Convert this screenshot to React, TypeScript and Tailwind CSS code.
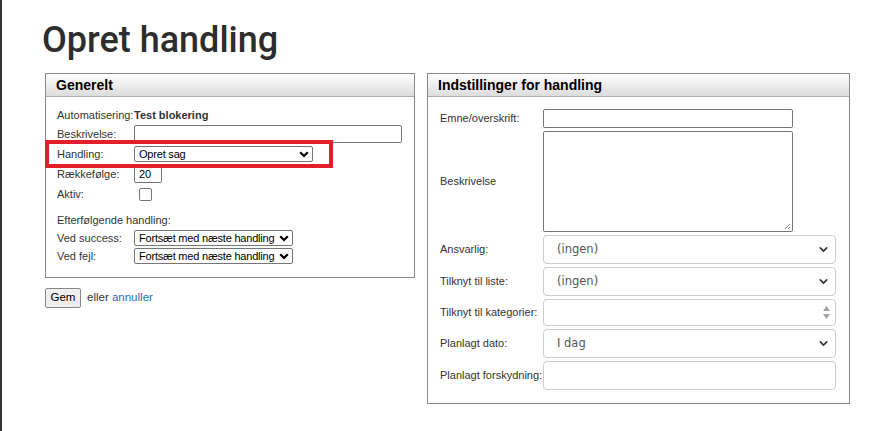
import { ChevronDown } from "lucide-react"

const labelFont = "font-['Liberation_Sans',Arial,sans-serif] text-[11px] text-[#333]"

function PanelHeader({ title }: { title: string }) {
  return (
    <div className="h-[23px] border-b border-[#aaa] bg-gradient-to-b from-white to-[#dcdcdc] pl-[10px] flex items-center">
      <span className="font-['Liberation_Sans',Arial,sans-serif] font-bold text-[14px] text-black">{title}</span>
    </div>
  )
}

// old-fashioned select used in the left panel
function OldSelect({ value, width }: { value: string; width: string }) {
  return (
    <div
      className={`${width} h-[16px] border border-[#767676] rounded-[2px] bg-white flex items-center justify-between pl-[4px] pr-[3px]`}
    >
      <span className="font-['Liberation_Sans',Arial,sans-serif] text-[11px] text-black leading-none tracking-[-0.2px]">{value}</span>
      <svg width="10" height="7" viewBox="0 0 10 7">
        <path d="M1.2 1.2 L5 5 L8.8 1.2" fill="none" stroke="#000" strokeWidth="2.2" />
      </svg>
    </div>
  )
}

// bootstrap-ish select used in the right panel
function NewSelect({ value, height = "h-[29px]" }: { value: string; height?: string }) {
  return (
    <div
      className={`w-[293px] ${height} border border-[#ccc] rounded-[4px] bg-white flex items-center justify-between pl-[13px] pr-[5px]`}
    >
      <span className="font-['DejaVu_Sans',Verdana,sans-serif] text-[11.5px] text-[#555]">{value}</span>
      <ChevronDown className="w-[13px] h-[13px] text-[#333]" strokeWidth={3} />
    </div>
  )
}

function LeftRow({ label, children, h = "h-[20px]" }: { label: string; children?: React.ReactNode; h?: string }) {
  return (
    <div className={`flex items-center ${h}`}>
      <div className={`w-[77px] shrink-0 ${labelFont}`}>{label}</div>
      {children}
    </div>
  )
}

function RightRow({ label, children, h }: { label: string; children?: React.ReactNode; h: string }) {
  return (
    <div className={`flex items-center ${h}`}>
      <div className={`w-[103px] shrink-0 ${labelFont}`}>{label}</div>
      {children}
    </div>
  )
}

export default function App() {
  return (
    <div className="min-h-screen bg-white border-l-2 border-[#333] pl-[40px] pt-[22px]">
      <h1 className="mb-[15px] leading-[36px] font-['Roboto',sans-serif] font-medium text-[36px] text-[#2d2d2d]">
        Opret handling
      </h1>

      <div className="ml-[3px] flex items-start gap-3">
        {/* Generelt */}
        <div className="w-[370px]">
          <div className="relative border border-[#888] bg-white">
            <PanelHeader title="Generelt" />
            <div className="pl-[11px] pt-[10px] pb-[12px]">
              <div className={`flex items-center h-[17px] ${labelFont}`}>
                <span className="w-[77px]">Automatisering:</span>
                <span className="font-bold">Test blokering</span>
              </div>
              <LeftRow label="Beskrivelse:">
                <div className="w-[268px] h-[18px] border border-[#767676] rounded-[2px] bg-white" />
              </LeftRow>
              <LeftRow label="Handling:">
                <OldSelect value="Opret sag" width="w-[179px]" />
              </LeftRow>
              <LeftRow label="Rækkefølge:">
                <div className="w-[28px] h-[17px] border border-[#767676] rounded-[2px] bg-white flex items-center pl-[4px]">
                  <span className="font-['Liberation_Sans',Arial,sans-serif] text-[11px] text-black leading-none">20</span>
                </div>
              </LeftRow>
              <LeftRow label="Aktiv:">
                <div className="ml-[5px] w-[13px] h-[13px] border border-[#767676] rounded-[2px] bg-white" />
              </LeftRow>
              <div className={`mt-[7px] h-[18px] flex items-center ${labelFont}`}>Efterfølgende handling:</div>
              <LeftRow label="Ved success:" h="h-[18px]">
                <OldSelect value="Fortsæt med næste handling" width="w-[159px]" />
              </LeftRow>
              <LeftRow label="Ved fejl:" h="h-[18px]">
                <OldSelect value="Fortsæt med næste handling" width="w-[159px]" />
              </LeftRow>
            </div>
            {/* highlight annotation */}
            <div className="absolute left-[-1px] top-[66px] w-[288px] h-[28px] border-[4px] border-[#e3202a] pointer-events-none" />
          </div>

          <div className="mt-[10px] flex items-center gap-[6px] font-['Liberation_Sans',Arial,sans-serif] text-[11.5px]">
            <div className="w-[36px] h-[20px] border border-[#888] rounded-[2px] bg-[#efefef] flex items-center justify-center text-black">
              Gem
            </div>
            <span className="text-[#333]">
              eller <span className="text-[#2a6ead]">annuller</span>
            </span>
          </div>
        </div>

        {/* Indstillinger for handling */}
        <div className="w-[423px] border border-[#888] bg-white">
          <PanelHeader title="Indstillinger for handling" />
          <div className="pl-[12px] pt-[12px] pb-[13px] flex flex-col">
            <RightRow label="Emne/overskrift:" h="h-[19px]">
              <div className="w-[250px] h-[19px] border border-[#767676] rounded-[2px] bg-white" />
            </RightRow>
            <RightRow label="Beskrivelse" h="h-[101px] mt-[3px]">
              <div className="relative w-[250px] h-[101px] border border-[#767676] rounded-[2px] bg-white">
                <svg className="absolute right-[1px] bottom-[1px]" width="7" height="7" viewBox="0 0 7 7">
                  <path d="M6 1 L1 6 M6 4 L4 6" stroke="#888" strokeWidth="1" />
                </svg>
              </div>
            </RightRow>
            <div className="flex flex-col gap-[3px] mt-[3px]">
              <RightRow label="Ansvarlig:" h="h-[29px]">
                <NewSelect value="(ingen)" />
              </RightRow>
              <RightRow label="Tilknyt til liste:" h="h-[29px]">
                <NewSelect value="(ingen)" />
              </RightRow>
              <RightRow label="Tilknyt til kategorier:" h="h-[27px]">
                <div className="w-[293px] h-[27px] border border-[#ccc] rounded-[4px] bg-white flex flex-col items-end justify-center gap-[3px] pr-[5px]">
                  <svg width="7" height="5" viewBox="0 0 7 5">
                    <path d="M3.5 0 L7 5 L0 5 Z" fill="#a3a3a3" />
                  </svg>
                  <svg width="7" height="5" viewBox="0 0 7 5">
                    <path d="M0 0 L7 0 L3.5 5 Z" fill="#a3a3a3" />
                  </svg>
                </div>
              </RightRow>
              <RightRow label="Planlagt dato:" h="h-[29px]">
                <NewSelect value="I dag" />
              </RightRow>
              <RightRow label="Planlagt forskydning:" h="h-[29px]">
                <div className="w-[293px] h-[29px] border border-[#ccc] rounded-[4px] bg-white" />
              </RightRow>
            </div>
          </div>
        </div>
      </div>
    </div>
  )
}
